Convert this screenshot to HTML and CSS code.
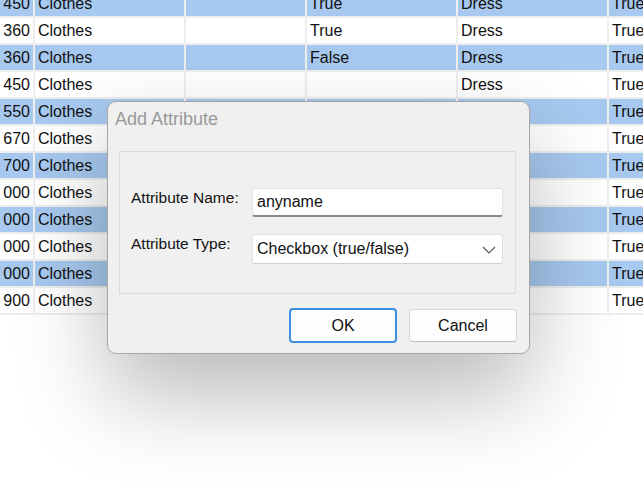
FILE: index.html
```html
<!DOCTYPE html>
<html>
<head>
<meta charset="utf-8">
<link rel="stylesheet" href="styles.css">
</head>
<body>
<div class="grid">
  <div class="c r b n">450</div><div class="c b">Clothes</div><div class="c b"></div><div class="c b">True</div><div class="c b">Dress</div><div class="c b">True</div>
  <div class="c r n">360</div><div class="c">Clothes</div><div class="c"></div><div class="c">True</div><div class="c">Dress</div><div class="c">True</div>
  <div class="c r b n">360</div><div class="c b">Clothes</div><div class="c b"></div><div class="c b">False</div><div class="c b">Dress</div><div class="c b">True</div>
  <div class="c r n">450</div><div class="c">Clothes</div><div class="c"></div><div class="c"></div><div class="c">Dress</div><div class="c">True</div>
  <div class="c r b n">550</div><div class="c b">Clothes</div><div class="c b"></div><div class="c b"></div><div class="c b"></div><div class="c b">True</div>
  <div class="c r n">670</div><div class="c">Clothes</div><div class="c"></div><div class="c"></div><div class="c"></div><div class="c">True</div>
  <div class="c r b n">700</div><div class="c b">Clothes</div><div class="c b"></div><div class="c b"></div><div class="c b"></div><div class="c b">True</div>
  <div class="c r n">000</div><div class="c">Clothes</div><div class="c"></div><div class="c"></div><div class="c"></div><div class="c">True</div>
  <div class="c r b n">000</div><div class="c b">Clothes</div><div class="c b"></div><div class="c b"></div><div class="c b"></div><div class="c b">True</div>
  <div class="c r n">000</div><div class="c">Clothes</div><div class="c"></div><div class="c"></div><div class="c"></div><div class="c">True</div>
  <div class="c r b n">000</div><div class="c b">Clothes</div><div class="c b"></div><div class="c b"></div><div class="c b"></div><div class="c b">True</div>
  <div class="c r n">900</div><div class="c">Clothes</div><div class="c"></div><div class="c"></div><div class="c"></div><div class="c">True</div>
</div>

<div class="dialog">
  <div class="title">Add Attribute</div>
  <div class="group">
    <div class="label">Attribute Name:</div>
    <div class="input">anyname</div>
    <div class="label">Attribute Type:</div>
    <div class="select">
      <span>Checkbox (true/false)</span>
      <svg class="chev" width="14" height="8" viewBox="0 0 14 8"><polyline points="1,1 7,7 13,1" fill="none" stroke="#5a5a5a" stroke-width="1.2"/></svg>
    </div>
  </div>
  <div class="buttons">
    <div class="btn ok">OK</div>
    <div class="btn">Cancel</div>
  </div>
</div>
</body>
</html>
```

FILE: styles.css
```css
html, body {
  margin: 0;
  padding: 0;
  background: #ffffff;
  width: 643px;
  height: 484px;
  overflow: hidden;
  font-family: "Liberation Sans", Arial, sans-serif;
}

.grid {
  margin-top: -9px;
  width: 660px;
  display: grid;
  grid-template-columns: 33px 149px 119px 149px 149px 1fr;
  grid-auto-rows: 25px;
  column-gap: 2px;
  row-gap: 2px;
  padding-bottom: 2px;
  background: #eeeeee;
}

.c {
  background: #ffffff;
  font-size: 16px;
  line-height: 25px;
  padding: 0 3px;
  color: #111;
  white-space: nowrap;
  overflow: hidden;
}

.c.b {
  background: #a7c9ef;
}

.c.r {
  text-align: right;
}

.c.n {
  padding: 0 3px 0 0;
}

.dialog {
  position: absolute;
  left: 107px;
  top: 101px;
  width: 421px;
  height: 251px;
  background: #f0f0f0;
  border: 1px solid #a6a6a6;
  border-radius: 9px;
  box-shadow: 0 40px 90px rgba(0, 0, 0, 0.28);
  display: flex;
  flex-direction: column;
}

.title {
  font-size: 18px;
  line-height: 20px;
  color: #999999;
  padding: 7px 0 0 7px;
  height: 22px;
}

.group {
  margin: 20px 13px 0 11px;
  border: 1px solid #dcdcdc;
  display: grid;
  grid-template-columns: 121px 251px;
  grid-template-rows: 29px 30px;
  row-gap: 17px;
  padding: 36px 0 0 11px;
  box-sizing: border-box;
  height: 143px;
}

.label {
  font-size: 15.5px;
  color: #111;
  line-height: 18px;
  padding-top: 1px;
}

.input {
  background: #fff;
  border: 1px solid #e2e2e2;
  border-bottom: 2px solid #8a8a8a;
  border-radius: 3px;
  font-size: 16px;
  line-height: 26px;
  padding-left: 4px;
  color: #111;
}

.select {
  background: #fff;
  border: 1px solid #e0e0e0;
  border-bottom-color: #cfcfcf;
  border-radius: 3px;
  font-size: 16px;
  line-height: 28px;
  padding-left: 4px;
  color: #111;
  display: flex;
  justify-content: space-between;
  align-items: center;
  padding-right: 6px;
}

.chev {
  display: block;
  margin-top: 1px;
}

.buttons {
  display: flex;
  justify-content: flex-end;
  gap: 12px;
  margin: 14px 12px 0 0;
  align-items: center;
}

.btn {
  width: 106px;
  height: 31px;
  background: #fdfdfd;
  border: 1px solid #d6d6d6;
  border-bottom-color: #bdbdbd;
  border-radius: 4px;
  font-size: 16px;
  line-height: 31px;
  text-align: center;
  color: #111;
}

.btn.ok {
  width: 104px;
  height: 31px;
  border: 2px solid #3b8ee0;
  line-height: 31px;
}
```
